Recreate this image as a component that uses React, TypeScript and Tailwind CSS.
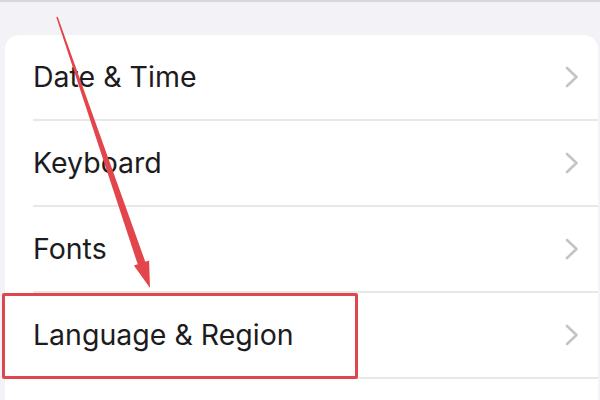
import React from 'react';

const rows = ['Date & Time', 'Keyboard', 'Fonts', 'Language & Region'];

const Chevron = () => (
  <svg width="14" height="22" viewBox="0 0 14 22" fill="none" className="shrink-0">
    <polyline
      points="2,2 11.5,11 2,20"
      stroke="#c4c4c7"
      strokeWidth="2.6"
      strokeLinecap="round"
      strokeLinejoin="round"
    />
  </svg>
);

export default function App() {
  return (
    <div
      className="relative w-[600px] h-[400px] overflow-hidden bg-[#f2f2f7] border-t-2 border-[#d8d8da]"
      style={{ fontFamily: 'Inter, "Liberation Sans", sans-serif' }}
    >
      <div className="pt-[33px] pl-[5px] pr-[2px]">
        <div className="bg-white rounded-[14px] pl-[28px]">
          {rows.map(label => (
            <div
              key={label}
              className="h-[86px] flex items-center justify-between border-b-2 border-[#e8e8ea] pr-[19px]"
            >
              <span className="text-[28.5px] leading-none text-[#1c1c1e] font-normal">{label}</span>
              <Chevron />
            </div>
          ))}
          <div className="h-[86px]" />
        </div>
      </div>

      {/* highlight box */}
      <div className="absolute left-[2px] top-[291px] w-[356px] h-[86px] border-[3px] border-[#e0474c] rounded-[2px]" />

      {/* arrow */}
      <svg className="absolute inset-0 pointer-events-none" width="600" height="400" viewBox="0 0 600 400">
        <polygon
          points="57.7,14.8 56.3,15.2 137.7,262.3 133.9,263.6 150,286 149.1,258.4 145.3,259.7"
          fill="#e2454b"
        />
      </svg>
    </div>
  );
}
